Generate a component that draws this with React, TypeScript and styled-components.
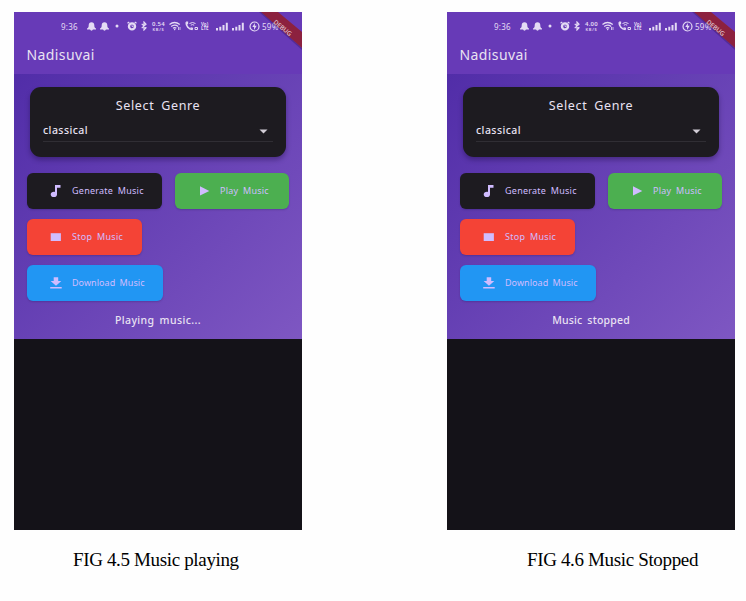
import React from "react";
import styled, { createGlobalStyle } from "styled-components";

const Global = createGlobalStyle`
  * { box-sizing: border-box; }
  body { margin: 0; background: #fefefe; }
`;

const Page = styled.main`
  width: 746px;
  height: 601px;
  padding: 12px 11px 0 14px;
  display: flex;
  justify-content: space-between;
  overflow: hidden;
`;

const Figure = styled.figure`
  margin: 0;
  width: 288px;
`;

const Phone = styled.div`
  position: relative;
  height: 518px;
  background: #141218;
  overflow: hidden;
  font-family: "Noto Sans", "Open Sans", sans-serif;
  color: #e9e2f2;
`;

const Header = styled.header`
  height: 62px;
  background: #673ab7;
`;

const StatusBar = styled.div`
  display: flex;
  align-items: center;
  height: 28px;
  padding-left: 47px;
  color: #e4daf4;
`;

const Slot = styled.div<{ $w: number; $gap?: number }>`
  flex: none;
  width: ${(p) => p.$w}px;
  margin-left: ${(p) => p.$gap ?? 0}px;
  display: flex;
  align-items: center;
  white-space: nowrap;
  svg { display: block; width: 100%; }
`;

const Clock = styled(Slot)`
  font-size: 8px;
  letter-spacing: 0.25px;
`;

const Speed = styled(Slot)`
  flex-direction: column;
  font-size: 6px;
  line-height: 6px;
  font-weight: 600;
  letter-spacing: 0.2px;
  small { font-size: 4px; line-height: 5px; letter-spacing: 0.7px; }
`;

const Network = styled(Slot)`
  font-size: 4.5px;
  line-height: 4.5px;
  font-weight: 700;
  white-space: pre;
`;

const AppTitle = styled.h1`
  margin: 4px 0 0 12.5px;
  font-size: 14px;
  line-height: 22px;
  font-weight: 400;
  letter-spacing: 0.4px;
`;

const Body = styled.section`
  height: 265px;
  padding: 13px 13px 0;
  background: linear-gradient(135deg, #512da8, #7e57c2);
`;

const Card = styled.div`
  height: 70px;
  margin: 0 3px;
  padding: 9px 13px 0;
  border-radius: 11px;
  background: #1d1b20;
  box-shadow: 0 3px 5px rgba(20, 5, 50, 0.35);
`;

const CardTitle = styled.h2`
  margin: 0;
  text-align: center;
  font-size: 12.5px;
  line-height: 19px;
  font-weight: 400;
  letter-spacing: 0.65px;
  word-spacing: 3px;
`;

const Select = styled.div`
  display: flex;
  justify-content: space-between;
  align-items: center;
  height: 27px;
  padding: 3px 5px 0 0;
  border-bottom: 1px solid #302e34;
  font-size: 10.5px;
  line-height: 14px;
  font-weight: 500;
  letter-spacing: 0.45px;
  svg { margin-top: 3px; }
`;

const Actions = styled.div`
  display: flex;
  flex-wrap: wrap;
  gap: 10px 13px;
  margin-top: 16px;
`;

const Action = styled.button<{ $w: number; $bg: string; $ls?: number }>`
  display: flex;
  align-items: center;
  gap: 9px;
  width: ${(p) => p.$w}px;
  height: 36px;
  padding: 0 0 1px 22px;
  border: 0;
  border-radius: 6px;
  background: ${(p) => p.$bg};
  color: #d0bcff;
  font-family: inherit;
  font-size: 9px;
  line-height: 13px;
  letter-spacing: ${(p) => p.$ls ?? 0.25}px;
  word-spacing: 2px;
  white-space: nowrap;
  box-shadow: 0 1px 2px rgba(20, 5, 50, 0.2);
  svg { flex: none; display: block; position: relative; top: 0.5px; }
`;

const Status = styled.p<{ $ls: number }>`
  margin: 11px 0 0;
  text-align: center;
  font-size: 10.5px;
  line-height: 16px;
  font-weight: 500;
  letter-spacing: ${(p) => p.$ls}px;
  word-spacing: 2px;
`;

const Ribbon = styled.svg`
  position: absolute;
  top: 0;
  right: 0;
  width: 50px;
  height: 42px;
`;

const Caption = styled.figcaption<{ $left: number; $ls: number }>`
  margin: 17px 0 0 ${(p) => p.$left}px;
  font-family: "Liberation Serif", serif;
  font-size: 19px;
  line-height: 25px;
  letter-spacing: ${(p) => p.$ls}px;
  white-space: nowrap;
  color: #000;
`;

const Bell = () => (
  <svg viewBox="0 0 8 8" fill="currentColor">
    <path d="M4 .3C2.4.3 1.500 1.500 1.500 2.800c0 1.600-.3 2.100-1.500 3v.9h8v-.9C6.800 4.900 6.500 4.400 6.500 2.800 6.500 1.500 5.600.3 4 .3ZM2.800 6.700h2.400c-.1.700-.6 1-1.200 1s-1.100-.3-1.200-1Z" />
  </svg>
);

const Alarm = () => (
  <svg viewBox="0 0 10 10" fill="none" stroke="currentColor">
    <circle cx="5" cy="5.400" r="3" strokeWidth="2.400" />
    <path d="M5 3.500v2h1.400" strokeWidth=".8" />
    <path d="M.5 2.300 2.300.9M7.700.9l1.800 1.400" strokeWidth="1.300" />
  </svg>
);

const Bluetooth = () => (
  <svg viewBox="0 0 6 10" fill="none" stroke="currentColor" strokeWidth="1.200">
    <path d="M.7 2.900 5 6.900 3 9V1l2 2.100L.7 7.100" />
  </svg>
);

const Wifi = () => (
  <svg viewBox="0 0 12 10" fill="none" stroke="currentColor" strokeWidth="1.300">
    <path d="M.5 3.500Q5.500-.5 10.800 3.500M2.200 5.500Q5.600 2.800 9.200 5.500M4 7.300Q5.700 6 7.300 7.300" />
    <path d="m5.700 7.500.9 1-.9.9-.9-.9Z" fill="currentColor" stroke="none" />
    <path d="M9.500 6v3M11 6v3" strokeWidth=".8" />
  </svg>
);

const Call = () => (
  <svg viewBox="0 0 14 10" fill="none" stroke="currentColor">
    <path d="M1.200 1.300C1 5 3.800 8.300 7.300 8.400" strokeWidth="1.700" />
    <path d="M1 1.200h1.500v2M5.500 6.900l1.900.4v1.500" strokeWidth="1.300" />
    <path d="M4.500 2.500q3-2 6 0M5.800 4.200q1.700-1.200 3.400 0" strokeWidth="1" />
    <path d="M10 6.500h2.500v2H10Z" strokeWidth="1" />
  </svg>
);

const Signal = () => (
  <svg viewBox="0 0 12 9" fill="currentColor">
    <path d="M0 6h2v2.500H0ZM3.300 4.800h2v3.700h-2ZM6.500 3h2v5.500h-2ZM9.800.7h2v7.800h-2Z" />
  </svg>
);

const Charging = () => (
  <svg viewBox="0 0 11 11" fill="none" stroke="currentColor">
    <circle cx="5.500" cy="5.500" r="4.500" strokeWidth="1.200" />
    <path d="M5.900 2 3.300 6h1.800L5 9l2.700-4.200H5.800Z" fill="currentColor" stroke="none" />
  </svg>
);

const Caret = () => (
  <svg width="9" height="5" viewBox="0 0 9 5">
    <path d="M.5.5h8l-4 4Z" fill="#d2cdd6" />
  </svg>
);

const Note = () => (
  <svg width="14" height="14" viewBox="0 0 14 14" fill="currentColor">
    <path d="M6 1h5.500v2.800H8v6.600C8 12 6.700 13 4.900 13s-3.200-1-3.200-2.600 1.400-2.700 3.200-2.700c.4 0 .8.1 1.100.2Z" />
  </svg>
);

const Play = () => (
  <svg width="14" height="14" viewBox="0 0 14 14" fill="currentColor">
    <path d="M3 2.200 12.300 7 3 11.600Z" />
  </svg>
);

const Stop = () => (
  <svg width="14" height="14" viewBox="0 0 14 14" fill="currentColor">
    <path d="M1.700 3.200h10.200v7.800H1.700Z" />
  </svg>
);

const Download = () => (
  <svg width="14" height="14" viewBox="0 0 14 14" fill="currentColor">
    <path d="M4.700 1.200h4.500v3.900h3.100L7 9.700 1.600 5.100h3.100ZM1.200 11h11.500v1.500H1.200Z" />
  </svg>
);

const DebugRibbon = () => (
  <Ribbon viewBox="0 0 50 42">
    <path d="M7 0 50 38V36L10 0Z" fill="#35176b" opacity=".4" />
    <path d="M9 0H26L50 20V36Z" fill="#8f2034" opacity=".92" />
    <text
      x="30.500"
      y="18"
      transform="rotate(39 30.500 16)"
      textAnchor="middle"
      fontSize="6.300"
      fontWeight="500"
      fill="#e0cbd6"
    >
      DEBUG
    </text>
  </Ribbon>
);

type ScreenProps = {
  speed: string;
  message: string;
  messageSpacing: number;
  caption: string;
  captionLeft: number;
  captionSpacing: number;
};

const Screen = ({ speed, message, messageSpacing, caption, captionLeft, captionSpacing }: ScreenProps) => (
  <Figure>
    <Phone>
      <Header>
        <StatusBar>
          <Clock $w={18}>9:36</Clock>
          <Slot $w={9} $gap={8}><Bell /></Slot>
          <Slot $w={9} $gap={4}><Bell /></Slot>
          <Slot $w={4} $gap={6}>
            <svg viewBox="0 0 4 4"><circle cx="2" cy="2" r="1.500" fill="currentColor" /></svg>
          </Slot>
          <Slot $w={10} $gap={8}><Alarm /></Slot>
          <Slot $w={6} $gap={4}><Bluetooth /></Slot>
          <Speed $w={15} $gap={4}>{speed}<small>KB/S</small></Speed>
          <Slot $w={12} $gap={3}><Wifi /></Slot>
          <Slot $w={14} $gap={4}><Call /></Slot>
          <Network $w={11} $gap={2}>{"Vo)\nLTE"}</Network>
          <Slot $w={12} $gap={4}><Signal /></Slot>
          <Slot $w={12} $gap={4}><Signal /></Slot>
          <Slot $w={11} $gap={5}><Charging /></Slot>
          <Clock $w={20} $gap={2}>59%</Clock>
        </StatusBar>
        <AppTitle>Nadisuvai</AppTitle>
      </Header>
      <Body>
        <Card>
          <CardTitle>Select Genre</CardTitle>
          <Select>classical<Caret /></Select>
        </Card>
        <Actions>
          <Action $w={135} $bg="#1d1b20"><Note />Generate Music</Action>
          <Action $w={114} $bg="#4caf50"><Play />Play Music</Action>
          <Action $w={115} $bg="#f44336" $ls={0.3}><Stop />Stop Music</Action>
          <Action $w={136} $bg="#2196f3" $ls={0.05}><Download />Download Music</Action>
        </Actions>
        <Status $ls={messageSpacing}>{message}</Status>
      </Body>
      <DebugRibbon />
    </Phone>
    <Caption $left={captionLeft} $ls={captionSpacing}>{caption}</Caption>
  </Figure>
);

export default function App() {
  return (
    <>
      <Global />
      <Page>
        <Screen
          speed="0.54"
          message="Playing music..."
          messageSpacing={0.4}
          caption="FIG 4.5 Music playing"
          captionLeft={59}
          captionSpacing={-0.35}
        />
        <Screen
          speed="4.00"
          message="Music stopped"
          messageSpacing={0.2}
          caption="FIG 4.6 Music Stopped"
          captionLeft={80}
          captionSpacing={-0.35}
        />
      </Page>
    </>
  );
}
